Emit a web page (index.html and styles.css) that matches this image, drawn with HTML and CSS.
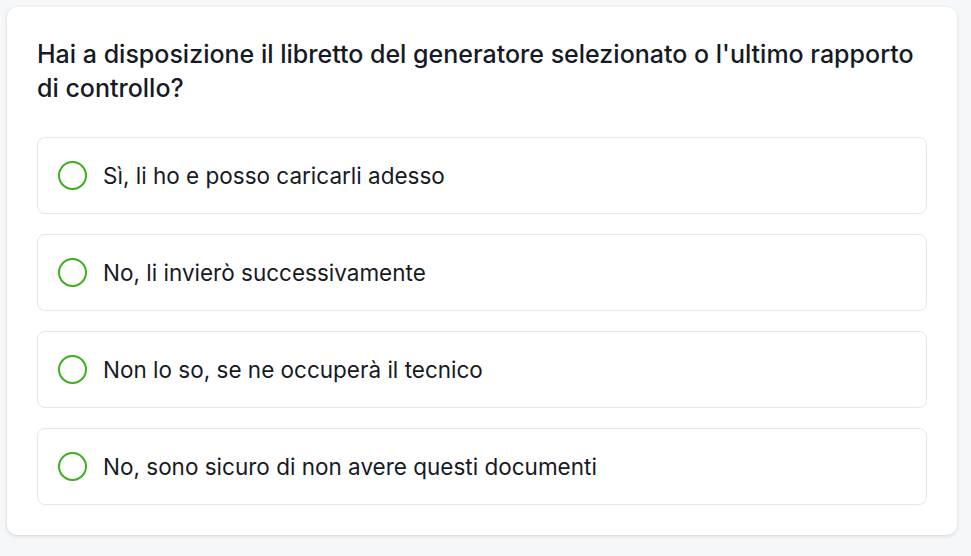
FILE: index.html
```html
<!DOCTYPE html>
<html lang="it">
<head>
    <meta charset="UTF-8">
    <meta name="viewport" content="width=device-width, initial-scale=1.0">
    <title>Documentazione generatore</title>
    <link rel="stylesheet" href="styles.css">
</head>
<body>
    <div class="question-card">
        <h2 class="question-title">Hai a disposizione il libretto del generatore selezionato o l'ultimo rapporto di controllo?</h2>

        <div class="options">
            <label class="option">
                <input type="radio" name="libretto" value="si">
                <span class="radio-mark"></span>
                <span class="option-text">Sì, li ho e posso caricarli adesso</span>
            </label>

            <label class="option">
                <input type="radio" name="libretto" value="dopo">
                <span class="radio-mark"></span>
                <span class="option-text">No, li invierò successivamente</span>
            </label>

            <label class="option">
                <input type="radio" name="libretto" value="tecnico">
                <span class="radio-mark"></span>
                <span class="option-text">Non lo so, se ne occuperà il tecnico</span>
            </label>

            <label class="option">
                <input type="radio" name="libretto" value="no">
                <span class="radio-mark"></span>
                <span class="option-text">No, sono sicuro di non avere questi documenti</span>
            </label>
        </div>
    </div>
</body>
</html>
```

FILE: styles.css
```css
:root {
    --page-bg: #f6f7f9;
    --card-bg: #ffffff;
    --text-color: #161a25;
    --border-color: #e6e7ea;
    --accent-green: #3eae1f;
}

body {
    font-family: Inter, 'Noto Sans', sans-serif;
    margin: 0;
    padding: 7px;
    background-color: var(--page-bg);
    color: var(--text-color);
}

.question-card {
    width: 950px;
    box-sizing: border-box;
    background: var(--card-bg);
    border-radius: 10px;
    padding: 30px;
    box-shadow: 0 1px 4px rgba(0, 0, 0, 0.12), 0 1px 2px rgba(0, 0, 0, 0.04);
}

.question-title {
    font-size: 25px;
    font-weight: 500;
    line-height: 34px;
    margin: 0 0 32px;
}

.options {
    display: flex;
    flex-direction: column;
    gap: 20px;
}

.option {
    display: flex;
    align-items: center;
    gap: 16px;
    height: 77px;
    box-sizing: border-box;
    padding: 0 20px;
    border: 1px solid var(--border-color);
    border-radius: 8px;
    cursor: pointer;
}

.option input {
    display: none;
}

.radio-mark {
    width: 29px;
    height: 29px;
    box-sizing: border-box;
    border: 2px solid var(--accent-green);
    border-radius: 50%;
    flex-shrink: 0;
}

.option input:checked + .radio-mark {
    background: radial-gradient(circle, var(--accent-green) 40%, transparent 45%);
}

.option-text {
    font-size: 22.5px;
    line-height: 30px;
}
```
